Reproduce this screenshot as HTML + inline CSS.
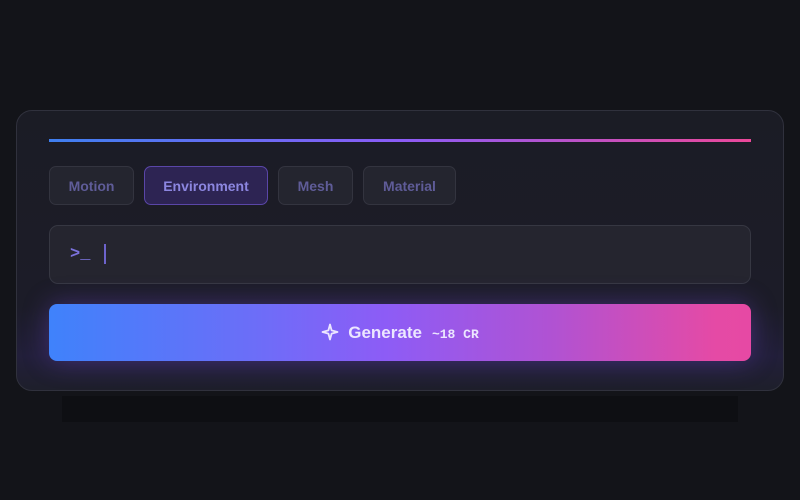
<!DOCTYPE html>
<html><head><style>
html,body{margin:0;width:800px;height:500px;background:#131419;overflow:hidden;font-family:"Liberation Sans",sans-serif}
.shadow{position:absolute;left:62px;top:396px;width:676px;height:26px;background:#0e0f13}
.card{position:absolute;left:16px;top:110px;width:766px;height:279px;border:1px solid #30313d;border-radius:16px;background:linear-gradient(180deg,#1b1c25 0%,#1c1c28 70%,#221f3a 88%,#1e1f2b 100%)}
.line{position:absolute;left:49px;top:139px;width:702px;height:3px;background:linear-gradient(90deg,#3f7fef,#8b5cf6 50%,#ec4899)}
.tab{position:absolute;top:166px;height:37px;border:1px solid #33343f;background:#24252f;border-radius:7px;color:#5f5c98;font-weight:bold;font-size:14px;line-height:38px;text-align:center;box-sizing:content-box}
.tab.on{background:#2d2453;border-color:#5a46a8;color:#8c86e0}
.input{position:absolute;left:49px;top:225px;width:700px;height:57px;border:1px solid #363742;border-radius:9px;background:#25252f}
.prompt{position:absolute;left:70px;top:245px;font-family:"Liberation Mono",monospace;font-weight:bold;font-size:17px;color:#7b72dc}
.caret{position:absolute;left:104px;top:244px;width:2px;height:20px;background:#6d63cc}
.btn{position:absolute;left:49px;top:304px;width:702px;height:57px;border-radius:8px;background:linear-gradient(90deg,#3f82fb 0%,#6d6df8 30%,#8d5cf6 48%,#b152d2 72%,#e54aa5 95%,#e649a4 100%);box-shadow:0 0 26px rgba(130,80,240,.35)}
.bt{position:absolute;left:0;right:0;top:0;line-height:57px;text-align:center;color:#ece6ff;font-weight:bold;font-size:17px}
.cr{font-family:"Liberation Mono",monospace;font-size:13px;margin-left:10px;font-weight:bold}
</style></head><body>
<div class="shadow"></div>
<div class="card"></div>
<div class="line"></div>
<div class="tab" style="left:49px;width:83px">Motion</div>
<div class="tab on" style="left:144px;width:122px">Environment</div>
<div class="tab" style="left:278px;width:73px">Mesh</div>
<div class="tab" style="left:363px;width:91px">Material</div>
<div class="input"></div>
<div class="prompt">&gt;_</div>
<div class="caret"></div>
<div class="btn"><div class="bt"><svg width="18" height="18" viewBox="0 0 18 18" style="vertical-align:-3px;margin-right:9px"><path d="M9 1.5 L10.6 7.4 L16.5 9 L10.6 10.6 L9 16.5 L7.4 10.6 L1.5 9 L7.4 7.4 Z" fill="none" stroke="#ece6ff" stroke-width="1.8" stroke-linejoin="round"/></svg>Generate<span class="cr">~18 CR</span></div></div>
</body></html>
